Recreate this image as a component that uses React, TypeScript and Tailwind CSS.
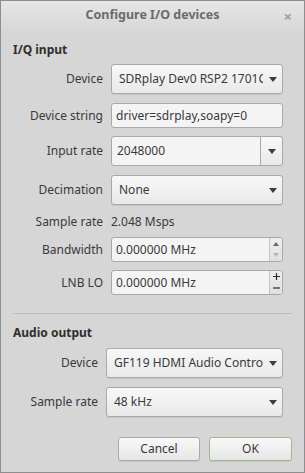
import React from 'react';

const font = { fontFamily: '"Noto Sans", "DejaVu Sans", sans-serif' };

const Arrow = () => (
  <svg width="8" height="5" viewBox="0 0 8 5" className="shrink-0">
    <path d="M0 0 L8 0 L4 5 Z" fill="#3c3c3c" />
  </svg>
);

const Combo = ({ text, className = '' }: { text: string; className?: string }) => (
  <div
    className={`flex items-center rounded-[3px] border border-[#a9a9a9] bg-gradient-to-b from-[#f8f8f8] to-[#e9e9e9] pl-[7px] pr-[5px] shadow-[0_1px_0_rgba(0,0,0,0.08)] ${className}`}
  >
    <span className="mr-[6px] min-w-0 flex-1 overflow-hidden whitespace-nowrap">{text}</span>
    <Arrow />
  </div>
);

const Row = ({ label, children, labelW = 'w-[102px]', mt = '' }: { label: string; children: React.ReactNode; labelW?: string; mt?: string }) => (
  <div className={`flex items-center ${mt}`}>
    <div className={`${labelW} shrink-0 text-right`}>{label}</div>
    <div className="ml-[8px]">{children}</div>
  </div>
);

const SpinBox = ({ value, plusMinus }: { value: string; plusMinus?: boolean }) => (
  <div className="flex h-[25px] w-[172px] rounded-[3px] border border-[#a9a9a9] bg-[#f4f4f4]">
    <div className="flex flex-1 items-center pl-[4px]">{value}</div>
    <div className="flex w-[13px] flex-col rounded-r-[3px] border-l border-[#c4c4c4] bg-gradient-to-b from-[#eeeeee] to-[#e0e0e0]">
      {plusMinus ? (
        <>
          <div className="flex flex-1 items-center justify-center">
            <svg width="7" height="7" viewBox="0 0 7 7"><path d="M3.5 0 V7 M0 3.5 H7" stroke="#2e2e2e" strokeWidth="1.2" /></svg>
          </div>
          <div className="flex flex-1 items-center justify-center">
            <svg width="7" height="2" viewBox="0 0 7 2"><path d="M0 1 H7" stroke="#2e2e2e" strokeWidth="1.2" /></svg>
          </div>
        </>
      ) : (
        <>
          <div className="flex flex-1 items-center justify-center">
            <svg width="6" height="4" viewBox="0 0 6 4"><path d="M0 4 L6 4 L3 0 Z" fill="#6a6a6a" /></svg>
          </div>
          <div className="flex flex-1 items-center justify-center">
            <svg width="6" height="4" viewBox="0 0 6 4"><path d="M0 0 L6 0 L3 4 Z" fill="#b8b8b8" /></svg>
          </div>
        </>
      )}
    </div>
  </div>
);

export default function App() {
  return (
    <div style={font} className="relative flex h-[473px] w-[305px] flex-col border border-[#8e8e8e] bg-[#d6d6d6] text-[12px] text-[#3a3a3a]">
      {/* title bar */}
      <div className="relative flex h-[29px] shrink-0 items-center justify-center bg-gradient-to-b from-[#e6e6e6] to-[#d8d8d8]">
        <span className="text-[12.5px] font-bold text-[#6b6b6b]">Configure I/O devices</span>
        <span className="absolute right-[12px] top-[4px] text-[15px] font-bold text-[#a0a0a0]">×</span>
      </div>

      <div className="mt-[11px] pl-[12px] font-bold text-[#2e2e2e]">I/Q input</div>

      <div className="flex flex-col">
        <Row label="Device" mt="mt-[5px]">
          <Combo text="SDRplay Dev0 RSP2 1701C" className="h-[30px] w-[172px]" />
        </Row>
        <Row label="Device string" mt="mt-[9px]">
          <div className="flex h-[25px] w-[172px] items-center rounded-[3px] border border-[#a9a9a9] bg-[#f4f4f4] pl-[4px]">
            driver=sdrplay,soapy=0
          </div>
        </Row>
        <Row label="Input rate" mt="mt-[8px]">
          <div className="flex h-[30px] w-[172px]">
            <div className="flex flex-1 items-center rounded-l-[3px] border border-[#a9a9a9] bg-[#f4f4f4] pl-[5px]">2048000</div>
            <div className="flex w-[22px] items-center justify-center rounded-r-[3px] border border-l-0 border-[#a9a9a9] bg-gradient-to-b from-[#f8f8f8] to-[#e9e9e9]">
              <Arrow />
            </div>
          </div>
        </Row>
        <Row label="Decimation" mt="mt-[9px]">
          <Combo text="None" className="h-[30px] w-[172px]" />
        </Row>
        <Row label="Sample rate" mt="mt-[7px]">
          <div className="flex h-[19px] items-center">2.048 Msps</div>
        </Row>
        <Row label="Bandwidth" mt="mt-[6px]">
          <SpinBox value="0.000000 MHz" />
        </Row>
        <Row label="LNB LO" mt="mt-[8px]">
          <SpinBox value="0.000000 MHz" plusMinus />
        </Row>
      </div>

      <div className="mx-[12px] mt-[18px] h-px bg-[#bdbdbd]" />

      <div className="mt-[10px] pl-[12px] font-bold text-[#2e2e2e]">Audio output</div>

      <div className="flex flex-col">
        <Row label="Device" labelW="w-[97px]" mt="mt-[6px]">
          <Combo text="GF119 HDMI Audio Controller" className="h-[30px] w-[177px]" />
        </Row>
        <Row label="Sample rate" labelW="w-[97px]" mt="mt-[9px]">
          <Combo text="48 kHz" className="h-[30px] w-[177px]" />
        </Row>
      </div>

      <div className="mt-[20px] flex justify-end gap-[9px] pr-[12px]">
        <div className="flex h-[24px] w-[82px] items-center justify-center rounded-[3px] border border-[#a9a9a9] bg-gradient-to-b from-[#f8f8f8] to-[#e6e6e6] shadow-[0_1px_0_rgba(0,0,0,0.08)]">
          Cancel
        </div>
        <div className="flex h-[24px] w-[83px] items-center justify-center rounded-[3px] border border-[#9fb98a] bg-gradient-to-b from-[#f8f8f8] to-[#e6e6e6] shadow-[0_1px_0_rgba(0,0,0,0.08)]">
          OK
        </div>
      </div>
    </div>
  );
}
